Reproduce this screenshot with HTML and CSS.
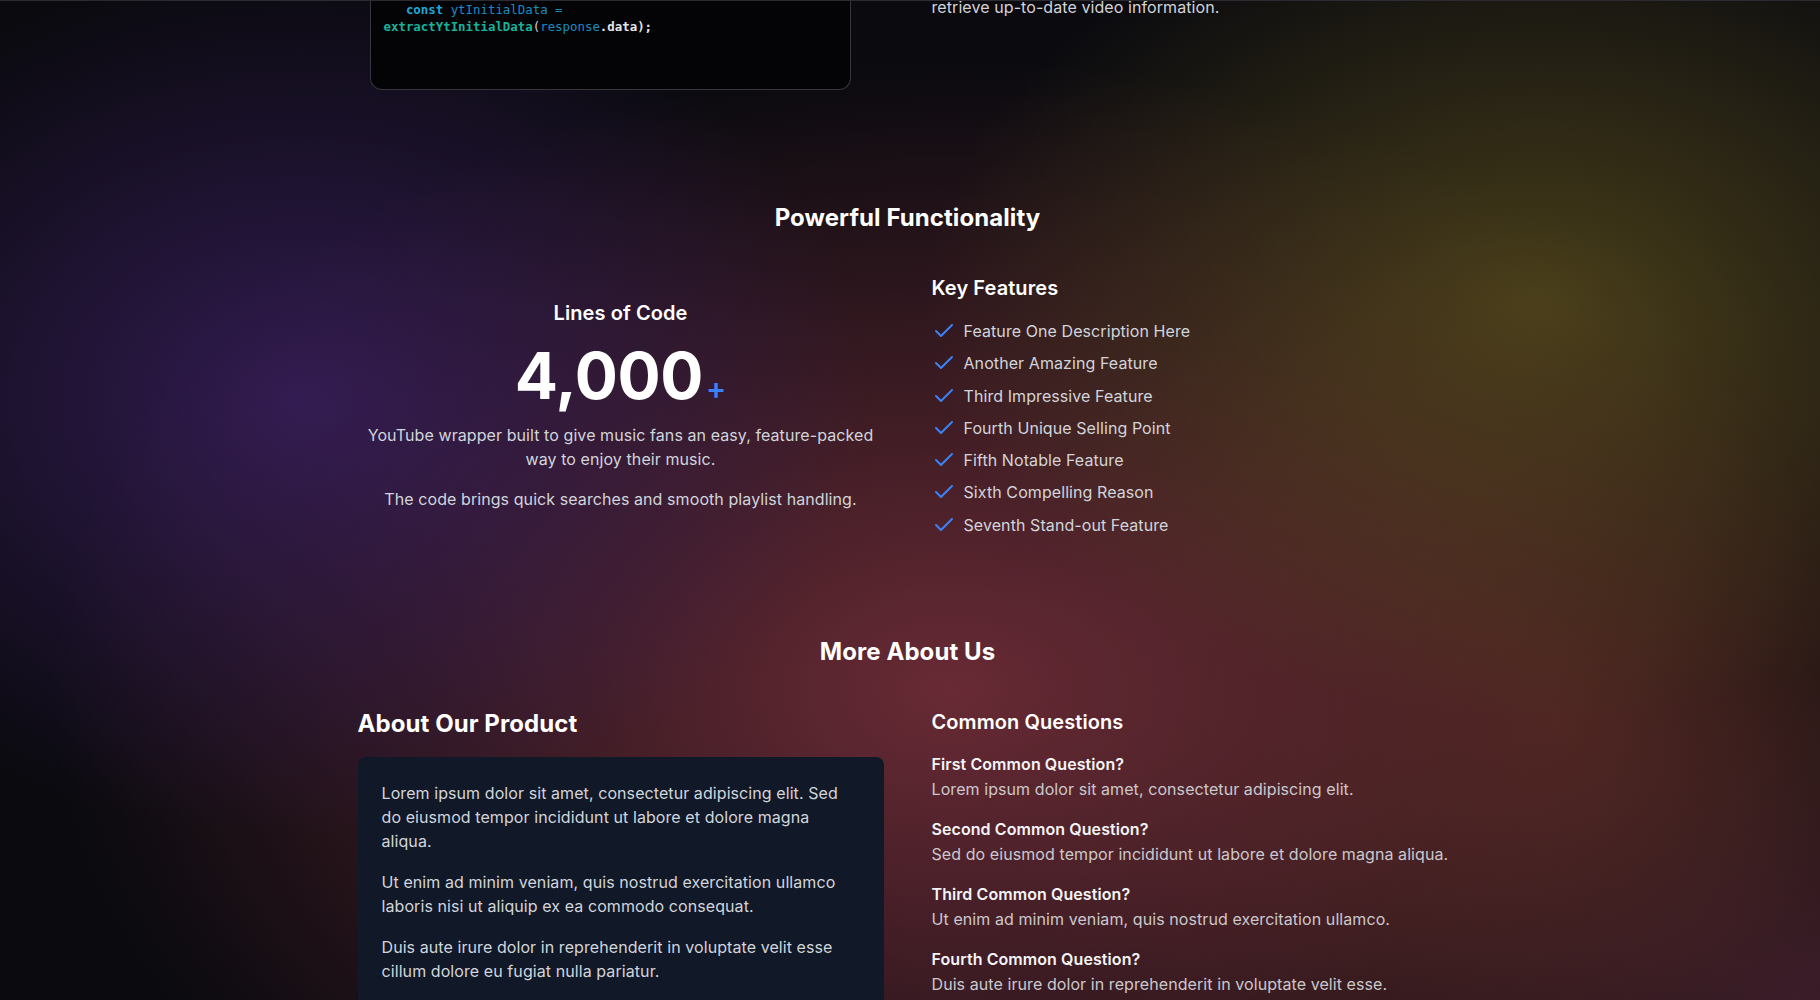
FILE: index.html
```html
<!DOCTYPE html>
<html lang="en">
<head>
<meta charset="utf-8">
<title>Powerful Functionality</title>
<link rel="stylesheet" href="styles.css">
</head>
<body>
<div class="page">
  <section class="intro">
    <div class="code-window">
<pre class="code"><span class="kw">   const</span> <span class="var">ytInitialData =</span>
<span class="fn">extractYtInitialData</span><span class="punc">(</span><span class="var">response</span><span class="plain">.data);</span></pre>
    </div>
    <div class="intro-text">
      <p>retrieve up-to-date video information.</p>
    </div>
  </section>

  <section class="features">
    <h2 class="section-title">Powerful Functionality</h2>
    <div class="grid-2 centered">
      <div class="stat">
        <h3 class="stat-label">Lines of Code</h3>
        <div class="stat-value">4,000<span class="stat-plus">+</span></div>
        <div class="stat-desc">
          <p>YouTube wrapper built to give music fans an easy, feature-packed way to enjoy their music.</p>
          <p>The code brings quick searches and smooth playlist handling.</p>
        </div>
      </div>
      <div class="key-features">
        <h3 class="col-title">Key Features</h3>
        <ul class="feature-list">
          <li><svg viewBox="0 0 24 24" width="24" height="24"><path d="M20 6 9 17l-5-5"/></svg><span>Feature One Description Here</span></li>
          <li><svg viewBox="0 0 24 24" width="24" height="24"><path d="M20 6 9 17l-5-5"/></svg><span>Another Amazing Feature</span></li>
          <li><svg viewBox="0 0 24 24" width="24" height="24"><path d="M20 6 9 17l-5-5"/></svg><span>Third Impressive Feature</span></li>
          <li><svg viewBox="0 0 24 24" width="24" height="24"><path d="M20 6 9 17l-5-5"/></svg><span>Fourth Unique Selling Point</span></li>
          <li><svg viewBox="0 0 24 24" width="24" height="24"><path d="M20 6 9 17l-5-5"/></svg><span>Fifth Notable Feature</span></li>
          <li><svg viewBox="0 0 24 24" width="24" height="24"><path d="M20 6 9 17l-5-5"/></svg><span>Sixth Compelling Reason</span></li>
          <li><svg viewBox="0 0 24 24" width="24" height="24"><path d="M20 6 9 17l-5-5"/></svg><span>Seventh Stand-out Feature</span></li>
        </ul>
      </div>
    </div>
  </section>

  <section class="about">
    <h2 class="section-title">More About Us</h2>
    <div class="grid-2">
      <div class="product">
        <h3 class="about-title">About Our Product</h3>
        <div class="card">
          <p>Lorem ipsum dolor sit amet, consectetur adipiscing elit. Sed do eiusmod tempor incididunt ut labore et dolore magna aliqua.</p>
          <p>Ut enim ad minim veniam, quis nostrud exercitation ullamco laboris nisi ut aliquip ex ea commodo consequat.</p>
          <p>Duis aute irure dolor in reprehenderit in voluptate velit esse cillum dolore eu fugiat nulla pariatur.</p>
        </div>
      </div>
      <div class="faq">
        <h3 class="col-title faq-title">Common Questions</h3>
        <div class="faq-item">
          <h4 class="faq-q">First Common Question?</h4>
          <p class="faq-a">Lorem ipsum dolor sit amet, consectetur adipiscing elit.</p>
        </div>
        <div class="faq-item">
          <h4 class="faq-q">Second Common Question?</h4>
          <p class="faq-a">Sed do eiusmod tempor incididunt ut labore et dolore magna aliqua.</p>
        </div>
        <div class="faq-item">
          <h4 class="faq-q">Third Common Question?</h4>
          <p class="faq-a">Ut enim ad minim veniam, quis nostrud exercitation ullamco.</p>
        </div>
        <div class="faq-item">
          <h4 class="faq-q">Fourth Common Question?</h4>
          <p class="faq-a">Duis aute irure dolor in reprehenderit in voluptate velit esse.</p>
        </div>
      </div>
    </div>
  </section>
</div>
</body>
</html>
```
FILE: styles.css
```css
* {
  box-sizing: border-box;
  margin: 0;
  padding: 0;
}

html, body {
  height: 1000px;
  overflow: hidden;
}

body {
  font-family: Inter, "Noto Sans", "Liberation Sans", sans-serif;
  color: #d1d5db;
  letter-spacing: 0.08px;
  padding-right: 5px;
  border-top: 1px solid #2c2b31;
  background-color: #0a0a0f;
  background-image:
    radial-gradient(820px 560px at 1540px 300px, rgba(88, 76, 28, 0.78), rgba(88, 76, 28, 0) 75%),
    radial-gradient(760px 580px at 300px 400px, rgba(56, 30, 92, 0.85), rgba(56, 30, 92, 0) 75%),
    radial-gradient(1200px 840px at 950px 690px, rgba(112, 45, 56, 0.92), rgba(112, 45, 56, 0) 75%),
    radial-gradient(780px 660px at 1560px 720px, rgba(88, 46, 30, 0.72), rgba(88, 46, 30, 0) 75%),
    radial-gradient(560px 440px at 1800px 1000px, rgba(72, 30, 60, 0.65), rgba(72, 30, 60, 0) 75%);
}

.page {
  width: 1100px;
  margin: 0 auto;
}

/* intro */
.intro {
  display: grid;
  grid-template-columns: 1fr 1fr;
  column-gap: 48px;
  align-items: start;
}

.code-window {
  margin-left: 12px;
  width: 481px;
  height: 89px;
  background: #040406;
  border: 1px solid #37353d;
  border-top: 0;
  border-radius: 0 0 12px 12px;
  padding: 0 14px 0 13px;
}

.code {
  font-family: "DejaVu Sans Mono", "Liberation Mono", monospace;
  font-size: 12.4px;
  line-height: 17px;
  letter-spacing: 0;
  white-space: pre;
  font-weight: 700;
  color: #e5e7eb;
}

.code .kw { color: #1fa6d6; }
.code .var { color: #1b8cc2; font-weight: 400; }
.code .fn { color: #17b39a; }
.code .punc { color: #d1d5db; font-weight: 400; }
.code .plain { color: #e5e7eb; }

.intro-text p {
  font-size: 16px;
  line-height: 24px;
  margin-top: -6px;
  color: #d4d4d8;
}

/* shared */
.section-title {
  font-size: 24px;
  line-height: 32px;
  font-weight: 700;
  color: #ffffff;
  text-align: center;
}

.grid-2 {
  display: grid;
  grid-template-columns: 1fr 1fr;
  column-gap: 48px;
  align-items: start;
}

.grid-2.centered {
  align-items: center;
}

.col-title {
  font-size: 20px;
  line-height: 28px;
  font-weight: 600;
  color: #ffffff;
}

/* features */
.features {
  padding-top: 112px;
}

.features .section-title {
  margin-bottom: 40px;
}

.stat {
  text-align: center;
}

.stat-label {
  font-size: 20px;
  line-height: 28px;
  font-weight: 600;
  color: #ffffff;
  margin-bottom: 17px;
}

.stat-value {
  font-size: 64px;
  line-height: 64px;
  font-weight: 700;
  letter-spacing: -0.4px;
  color: #ffffff;
  margin-bottom: 15px;
}

.stat-plus {
  font-size: 30px;
  line-height: 1;
  font-weight: 600;
  letter-spacing: 0;
  color: #3b82f6;
  margin-left: 3px;
}

.stat-desc p {
  font-size: 16px;
  line-height: 24px;
  color: #d1d5db;
}

.stat-desc p + p {
  margin-top: 16px;
}

.key-features .col-title {
  margin-bottom: 17px;
}

.feature-list {
  list-style: none;
  display: flex;
  flex-direction: column;
  gap: 8.3px;
}

.feature-list li {
  display: flex;
  align-items: center;
  gap: 8px;
  font-size: 16px;
  line-height: 24px;
  color: #d1d5db;
}

.feature-list svg {
  flex: none;
  fill: none;
  stroke: #3b82f6;
  stroke-width: 2;
  stroke-linecap: round;
  stroke-linejoin: round;
}

/* about */
.about {
  padding-top: 99px;
}

.about .section-title {
  margin-bottom: 40px;
}

.about-title {
  font-size: 24px;
  line-height: 32px;
  font-weight: 700;
  color: #ffffff;
  margin-bottom: 17px;
}

.card {
  background: #111827;
  border-radius: 8px;
  padding: 24px 32px 24px 24px;
}

.card p {
  font-size: 16px;
  line-height: 24px;
  color: #d1d5db;
}

.card p + p {
  margin-top: 17px;
}

.faq-title {
  margin-bottom: 16px;
}

.faq-item + .faq-item {
  margin-top: 16px;
}

.faq-q {
  font-size: 16px;
  line-height: 24px;
  font-weight: 600;
  color: #f3f4f6;
  margin-bottom: 1px;
}

.faq-a {
  font-size: 16px;
  line-height: 24px;
  color: #cbc8cd;
}
```
